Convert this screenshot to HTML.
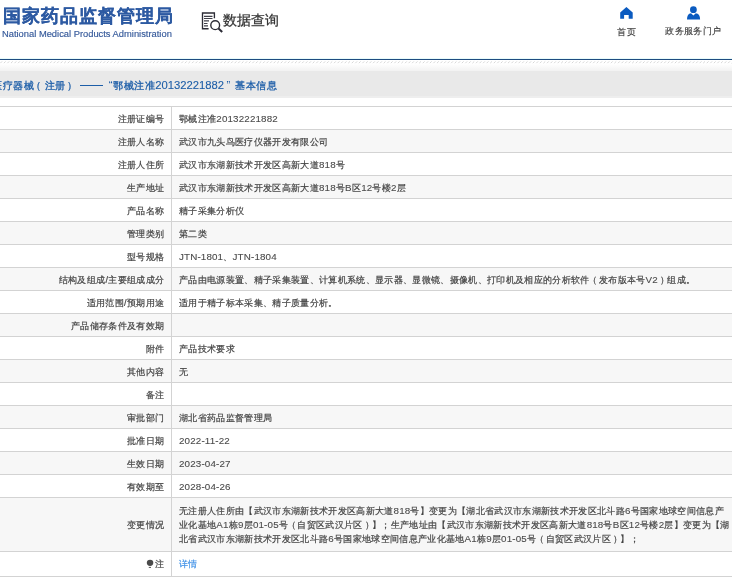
<!DOCTYPE html>
<html><head><meta charset="utf-8">
<style>
*{margin:0;padding:0;box-sizing:border-box}
body{will-change:transform}
html,body{width:732px;height:579px;overflow:hidden;background:#fff;font-family:"Liberation Sans",sans-serif;color:#333}
.abs{position:absolute;white-space:nowrap}
#logo{left:2.5px;top:3px;font-size:17.8px;letter-spacing:1px;line-height:26px;font-weight:bold;color:#2d5aa2;-webkit-text-stroke:0.2px #2d5aa2}
#logoen{left:2px;top:29px;font-size:9.35px;line-height:10px;color:#35599a;-webkit-text-stroke:0.15px #35599a}
#dq{left:223px;top:11.5px;font-size:14px;color:#333;-webkit-text-stroke:0.25px #333}
.nav{font-size:9.3px;letter-spacing:0.33px;color:#3c3c3c;-webkit-text-stroke:0.15px #3c3c3c;line-height:12px}
#topline{left:0;top:59px;width:732px;height:1px;background:#1f4c80}
#topline2{left:0;top:58px;width:732px;height:1px;background:#e8fbfb}
#hatch{left:0;top:61px;width:732px;height:2px;background:repeating-linear-gradient(135deg,#e6e6e6 0 0.9px,#fff 0.9px 2.5px)}
#bar{left:0;top:71px;width:732px;height:25px;background:#e9e9e9;border-bottom:2px solid #eeeeee;height:27px}
#bargrad{left:0;top:64px;width:732px;height:7px;background:linear-gradient(#fff,#f2f2f2)}
.bt{position:absolute;top:76.5px;-webkit-text-stroke:0.3px #1d5ea8;font-size:10.4px;letter-spacing:0.5px;line-height:17px;color:#1d5ea8;white-space:nowrap}
.row{position:absolute;left:0;width:732px;border-top:1px solid #d3d3d3}
.row.g{background:#f7f7f7}
.lab,.val{-webkit-text-stroke:0.2px #444}
.lab{position:absolute;right:567.7px;top:6px;font-size:9.3px;letter-spacing:0.33px;line-height:12px;color:#444;white-space:nowrap}
.val{position:absolute;left:179px;top:6px;font-size:9.3px;letter-spacing:0.33px;line-height:12px;color:#444;white-space:nowrap}
i.lp{font-style:normal;position:relative;left:-1.2px}
i.rp{font-style:normal;position:relative;left:2.5px}
b.la{font-weight:normal;-webkit-text-stroke:0.1px #4a4a4a;color:#4a4a4a;letter-spacing:0.15px;font-size:9.8px}
#vdiv{left:171px;top:106px;width:1px;height:470px;background:#d3d3d3}
</style></head><body>
<div class="abs" id="logo">国家药品监督管理局</div>
<div class="abs" id="logoen">National Medical Products Administration</div>
<svg class="abs" style="left:0;top:0" width="732" height="50" viewBox="0 0 732 50">
  <g fill="none" stroke="#2b2b35" stroke-width="1.35">
    <path d="M208.6 28.7 H202.5 V13 H214.4 V18.3"/>
    <circle cx="215.2" cy="25.2" r="4.4" stroke-width="1.4"/>
    <path d="M218.5 28.5 L222.2 32" stroke-width="2"/>
  </g>
  <g stroke="#3e3e48" stroke-width="1.2">
    <path d="M204 16.3 H212.5 M204 18.5 H212.5 M204 20.9 H209 M204 23.5 H207.5 M204 25.9 H208"/>
  </g>
  <path fill="#0b5bc0" d="M626.4 6.9 L632.7 12.5 V18.7 H628.7 V15.1 H624.1 V18.7 H620.2 V12.5 Z"/>
  <circle cx="693.4" cy="9.7" r="3.4" fill="#0b5bc0"/>
  <path fill="#0b5bc0" d="M687 19.6 Q687 13.6 691 13.3 L693.4 15.6 L695.8 13.3 Q700.1 13.6 700.1 19.6 Z"/>
</svg>
<div class="abs" id="dq">数据查询</div>
<div class="abs nav" style="left:617.3px;top:25.7px">首页</div>
<div class="abs nav" style="left:665.3px;top:24.5px">政务服务门户</div>
<div class="abs" id="topline2"></div>
<div class="abs" id="topline"></div>
<svg class="abs" style="left:0;top:60px" width="732" height="4"><path d="M0.30 3.2L2.10 1.4 M3.85 3.2L5.65 1.4 M7.40 3.2L9.20 1.4 M10.95 3.2L12.75 1.4 M14.50 3.2L16.30 1.4 M18.05 3.2L19.85 1.4 M21.60 3.2L23.40 1.4 M25.15 3.2L26.95 1.4 M28.70 3.2L30.50 1.4 M32.25 3.2L34.05 1.4 M35.80 3.2L37.60 1.4 M39.35 3.2L41.15 1.4 M42.90 3.2L44.70 1.4 M46.45 3.2L48.25 1.4 M50.00 3.2L51.80 1.4 M53.55 3.2L55.35 1.4 M57.10 3.2L58.90 1.4 M60.65 3.2L62.45 1.4 M64.20 3.2L66.00 1.4 M67.75 3.2L69.55 1.4 M71.30 3.2L73.10 1.4 M74.85 3.2L76.65 1.4 M78.40 3.2L80.20 1.4 M81.95 3.2L83.75 1.4 M85.50 3.2L87.30 1.4 M89.05 3.2L90.85 1.4 M92.60 3.2L94.40 1.4 M96.15 3.2L97.95 1.4 M99.70 3.2L101.50 1.4 M103.25 3.2L105.05 1.4 M106.80 3.2L108.60 1.4 M110.35 3.2L112.15 1.4 M113.90 3.2L115.70 1.4 M117.45 3.2L119.25 1.4 M121.00 3.2L122.80 1.4 M124.55 3.2L126.35 1.4 M128.10 3.2L129.90 1.4 M131.65 3.2L133.45 1.4 M135.20 3.2L137.00 1.4 M138.75 3.2L140.55 1.4 M142.30 3.2L144.10 1.4 M145.85 3.2L147.65 1.4 M149.40 3.2L151.20 1.4 M152.95 3.2L154.75 1.4 M156.50 3.2L158.30 1.4 M160.05 3.2L161.85 1.4 M163.60 3.2L165.40 1.4 M167.15 3.2L168.95 1.4 M170.70 3.2L172.50 1.4 M174.25 3.2L176.05 1.4 M177.80 3.2L179.60 1.4 M181.35 3.2L183.15 1.4 M184.90 3.2L186.70 1.4 M188.45 3.2L190.25 1.4 M192.00 3.2L193.80 1.4 M195.55 3.2L197.35 1.4 M199.10 3.2L200.90 1.4 M202.65 3.2L204.45 1.4 M206.20 3.2L208.00 1.4 M209.75 3.2L211.55 1.4 M213.30 3.2L215.10 1.4 M216.85 3.2L218.65 1.4 M220.40 3.2L222.20 1.4 M223.95 3.2L225.75 1.4 M227.50 3.2L229.30 1.4 M231.05 3.2L232.85 1.4 M234.60 3.2L236.40 1.4 M238.15 3.2L239.95 1.4 M241.70 3.2L243.50 1.4 M245.25 3.2L247.05 1.4 M248.80 3.2L250.60 1.4 M252.35 3.2L254.15 1.4 M255.90 3.2L257.70 1.4 M259.45 3.2L261.25 1.4 M263.00 3.2L264.80 1.4 M266.55 3.2L268.35 1.4 M270.10 3.2L271.90 1.4 M273.65 3.2L275.45 1.4 M277.20 3.2L279.00 1.4 M280.75 3.2L282.55 1.4 M284.30 3.2L286.10 1.4 M287.85 3.2L289.65 1.4 M291.40 3.2L293.20 1.4 M294.95 3.2L296.75 1.4 M298.50 3.2L300.30 1.4 M302.05 3.2L303.85 1.4 M305.60 3.2L307.40 1.4 M309.15 3.2L310.95 1.4 M312.70 3.2L314.50 1.4 M316.25 3.2L318.05 1.4 M319.80 3.2L321.60 1.4 M323.35 3.2L325.15 1.4 M326.90 3.2L328.70 1.4 M330.45 3.2L332.25 1.4 M334.00 3.2L335.80 1.4 M337.55 3.2L339.35 1.4 M341.10 3.2L342.90 1.4 M344.65 3.2L346.45 1.4 M348.20 3.2L350.00 1.4 M351.75 3.2L353.55 1.4 M355.30 3.2L357.10 1.4 M358.85 3.2L360.65 1.4 M362.40 3.2L364.20 1.4 M365.95 3.2L367.75 1.4 M369.50 3.2L371.30 1.4 M373.05 3.2L374.85 1.4 M376.60 3.2L378.40 1.4 M380.15 3.2L381.95 1.4 M383.70 3.2L385.50 1.4 M387.25 3.2L389.05 1.4 M390.80 3.2L392.60 1.4 M394.35 3.2L396.15 1.4 M397.90 3.2L399.70 1.4 M401.45 3.2L403.25 1.4 M405.00 3.2L406.80 1.4 M408.55 3.2L410.35 1.4 M412.10 3.2L413.90 1.4 M415.65 3.2L417.45 1.4 M419.20 3.2L421.00 1.4 M422.75 3.2L424.55 1.4 M426.30 3.2L428.10 1.4 M429.85 3.2L431.65 1.4 M433.40 3.2L435.20 1.4 M436.95 3.2L438.75 1.4 M440.50 3.2L442.30 1.4 M444.05 3.2L445.85 1.4 M447.60 3.2L449.40 1.4 M451.15 3.2L452.95 1.4 M454.70 3.2L456.50 1.4 M458.25 3.2L460.05 1.4 M461.80 3.2L463.60 1.4 M465.35 3.2L467.15 1.4 M468.90 3.2L470.70 1.4 M472.45 3.2L474.25 1.4 M476.00 3.2L477.80 1.4 M479.55 3.2L481.35 1.4 M483.10 3.2L484.90 1.4 M486.65 3.2L488.45 1.4 M490.20 3.2L492.00 1.4 M493.75 3.2L495.55 1.4 M497.30 3.2L499.10 1.4 M500.85 3.2L502.65 1.4 M504.40 3.2L506.20 1.4 M507.95 3.2L509.75 1.4 M511.50 3.2L513.30 1.4 M515.05 3.2L516.85 1.4 M518.60 3.2L520.40 1.4 M522.15 3.2L523.95 1.4 M525.70 3.2L527.50 1.4 M529.25 3.2L531.05 1.4 M532.80 3.2L534.60 1.4 M536.35 3.2L538.15 1.4 M539.90 3.2L541.70 1.4 M543.45 3.2L545.25 1.4 M547.00 3.2L548.80 1.4 M550.55 3.2L552.35 1.4 M554.10 3.2L555.90 1.4 M557.65 3.2L559.45 1.4 M561.20 3.2L563.00 1.4 M564.75 3.2L566.55 1.4 M568.30 3.2L570.10 1.4 M571.85 3.2L573.65 1.4 M575.40 3.2L577.20 1.4 M578.95 3.2L580.75 1.4 M582.50 3.2L584.30 1.4 M586.05 3.2L587.85 1.4 M589.60 3.2L591.40 1.4 M593.15 3.2L594.95 1.4 M596.70 3.2L598.50 1.4 M600.25 3.2L602.05 1.4 M603.80 3.2L605.60 1.4 M607.35 3.2L609.15 1.4 M610.90 3.2L612.70 1.4 M614.45 3.2L616.25 1.4 M618.00 3.2L619.80 1.4 M621.55 3.2L623.35 1.4 M625.10 3.2L626.90 1.4 M628.65 3.2L630.45 1.4 M632.20 3.2L634.00 1.4 M635.75 3.2L637.55 1.4 M639.30 3.2L641.10 1.4 M642.85 3.2L644.65 1.4 M646.40 3.2L648.20 1.4 M649.95 3.2L651.75 1.4 M653.50 3.2L655.30 1.4 M657.05 3.2L658.85 1.4 M660.60 3.2L662.40 1.4 M664.15 3.2L665.95 1.4 M667.70 3.2L669.50 1.4 M671.25 3.2L673.05 1.4 M674.80 3.2L676.60 1.4 M678.35 3.2L680.15 1.4 M681.90 3.2L683.70 1.4 M685.45 3.2L687.25 1.4 M689.00 3.2L690.80 1.4 M692.55 3.2L694.35 1.4 M696.10 3.2L697.90 1.4 M699.65 3.2L701.45 1.4 M703.20 3.2L705.00 1.4 M706.75 3.2L708.55 1.4 M710.30 3.2L712.10 1.4 M713.85 3.2L715.65 1.4 M717.40 3.2L719.20 1.4 M720.95 3.2L722.75 1.4 M724.50 3.2L726.30 1.4 M728.05 3.2L729.85 1.4 M731.60 3.2L733.40 1.4" stroke="#d6d6d6" stroke-width="1" fill="none"/></svg>
<div class="abs" id="bargrad"></div>
<div class="abs" id="bar"></div>
<span class="bt" style="left:-7.9px">医疗器械<span style="position:relative;left:-2.8px">（</span>注册<span style="position:relative;left:1.5px">）</span></span>
<div class="abs" style="left:79.6px;top:85px;width:23.2px;height:1px;background:#1d5ea8"></div>
<span class="bt" style="left:108.8px;font-size:11.3px;-webkit-text-stroke:0">“</span>
<span class="bt" style="left:113.2px">鄂械注准</span>
<span class="bt" style="left:155.2px;font-size:11.28px;letter-spacing:0;-webkit-text-stroke:0.1px #1d5ea8">20132221882</span>
<span class="bt" style="left:226.6px;font-size:11.3px;-webkit-text-stroke:0">”</span>
<span class="bt" style="left:235.4px">基本信息</span>

<div class="row" style="top:106px;height:23px"><span class="lab">注册证编号</span><span class="val">鄂械注准<b class="la">20132221882</b></span></div>
<div class="row g" style="top:129px;height:23px"><span class="lab">注册人名称</span><span class="val">武汉市九头鸟医疗仪器开发有限公司</span></div>
<div class="row" style="top:152px;height:23px"><span class="lab">注册人住所</span><span class="val">武汉市东湖新技术开发区高新大道<b class="la">818</b>号</span></div>
<div class="row g" style="top:175px;height:23px"><span class="lab">生产地址</span><span class="val">武汉市东湖新技术开发区高新大道<b class="la">818</b>号<b class="la">B</b>区<b class="la">12</b>号楼<b class="la">2</b>层</span></div>
<div class="row" style="top:198px;height:23px"><span class="lab">产品名称</span><span class="val">精子采集分析仪</span></div>
<div class="row g" style="top:221px;height:23px"><span class="lab">管理类别</span><span class="val">第二类</span></div>
<div class="row" style="top:244px;height:23px"><span class="lab">型号规格</span><span class="val"><b class="la">JTN-1801</b>、<b class="la">JTN-1804</b></span></div>
<div class="row g" style="top:267px;height:23px"><span class="lab">结构及组成/主要组成成分</span><span class="val" id="v8">产品由电源装置、精子采集装置、计算机系统、显示器、显微镜、摄像机、打印机及相应的分析软件<i class="lp">（</i>发布版本号<b class="la">V2</b><i class="rp">）</i>组成。</span></div>
<div class="row" style="top:290px;height:23px"><span class="lab">适用范围/预期用途</span><span class="val">适用于精子标本采集、精子质量分析。</span></div>
<div class="row g" style="top:313px;height:23px"><span class="lab">产品储存条件及有效期</span></div>
<div class="row" style="top:336px;height:23px"><span class="lab">附件</span><span class="val">产品技术要求</span></div>
<div class="row g" style="top:359px;height:23px"><span class="lab">其他内容</span><span class="val">无</span></div>
<div class="row" style="top:382px;height:23px"><span class="lab">备注</span></div>
<div class="row g" style="top:405px;height:23px"><span class="lab">审批部门</span><span class="val">湖北省药品监督管理局</span></div>
<div class="row" style="top:428px;height:23px"><span class="lab">批准日期</span><span class="val"><b class="la">2022-11-22</b></span></div>
<div class="row g" style="top:451px;height:23px"><span class="lab">生效日期</span><span class="val"><b class="la">2023-04-27</b></span></div>
<div class="row" style="top:474px;height:23px"><span class="lab">有效期至</span><span class="val"><b class="la">2028-04-26</b></span></div>
<div class="row g" style="top:497px;height:54px"><span class="lab" style="top:20.8px">变更情况</span><span class="val" id="bg" style="top:6px;line-height:14.2px">无注册人住所由【武汉市东湖新技术开发区高新大道<b class="la">818</b>号】变更为【湖北省武汉市东湖新技术开发区北斗路<b class="la">6</b>号国家地球空间信息产<br>业化基地<b class="la">A1</b>栋<b class="la">9</b>层<b class="la">01-05</b>号<i class="lp">（</i>自贸区武汉片区<i class="rp">）</i>】；生产地址由【武汉市东湖新技术开发区高新大道<b class="la">818</b>号<b class="la">B</b>区<b class="la">12</b>号楼<b class="la">2</b>层】变更为【湖<br>北省武汉市东湖新技术开发区北斗路<b class="la">6</b>号国家地球空间信息产业化基地<b class="la">A1</b>栋<b class="la">9</b>层<b class="la">01-05</b>号<i class="lp">（</i>自贸区武汉片区<i class="rp">）</i>】；</span></div>
<div class="row" style="top:551px;height:26px;border-bottom:1px solid #d3d3d3"><span class="lab">注</span><span class="val" style="color:#3a8ee6;-webkit-text-stroke:0.15px #3a8ee6">详情</span></div>
<div class="abs" id="vdiv"></div>
<svg class="abs" style="left:140px;top:553px" width="20" height="20" viewBox="140 553 20 20"><ellipse cx="150.05" cy="562.85" rx="3.25" ry="3.1" fill="#4a4a4a"/><rect x="148.8" y="566.9" width="2.2" height="1" fill="#555"/></svg>
</body></html>
